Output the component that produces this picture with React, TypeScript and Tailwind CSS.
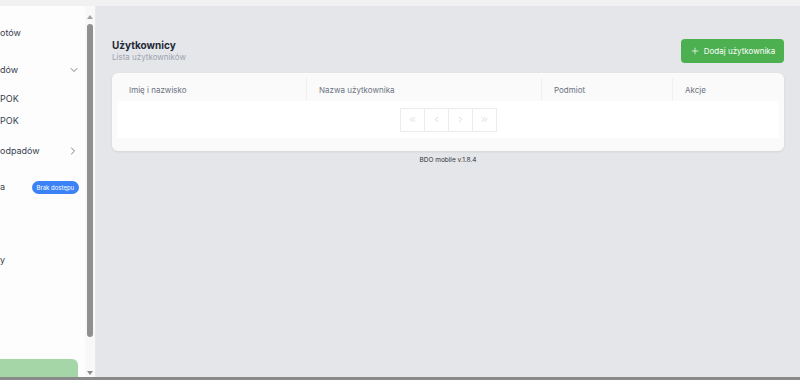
import React from "react";
import { ChevronDown, ChevronRight, ChevronLeft, ChevronsLeft, ChevronsRight, Plus } from "lucide-react";

function SideRow({ children, mt, right, pr = "pr-[6px]" }: { children: React.ReactNode; mt: string; right?: React.ReactNode; pr?: string }) {
  return (
    <div className={`flex h-[20px] items-center justify-between ${pr} ${mt}`}>
      <span className="text-[9px] text-[#374151]">{children}</span>
      {right}
    </div>
  );
}

export default function App() {
  const cols = [
    { label: "Imię i nazwisko", w: "w-[190px]" },
    { label: "Nazwa użytkownika", w: "w-[235px]" },
    { label: "Podmiot", w: "w-[131px]" },
    { label: "Akcje", w: "flex-1" },
  ];
  return (
    <div className="flex h-[380px] w-[800px] flex-col overflow-hidden bg-[#f1f1f1]" style={{ fontFamily: "Inter, 'Noto Sans', sans-serif" }}>
      <div className="h-[6px] shrink-0 bg-[#f1f1f1]" />
      <div className="flex min-h-0 flex-1">
        {/* Sidebar */}
        <div className="flex w-[96px] shrink-0 bg-[#fdfdfd] border-r border-[#e9e9e9]">
          <div className="flex w-[86px] flex-col">
            <SideRow mt="mt-[17px]">otów</SideRow>
            <SideRow mt="mt-[17px]" pr="pr-[5px]" right={<ChevronDown size={12} strokeWidth={1.5} className="text-[#4b5563]" />}>dów</SideRow>
            <SideRow mt="mt-[9px]">POK</SideRow>
            <SideRow mt="mt-[2px]">POK</SideRow>
            <SideRow mt="mt-[10px]" pr="pr-[6px]" right={<ChevronRight size={12} strokeWidth={1.5} className="text-[#4b5563]" />}>odpadów</SideRow>
            <SideRow
              mt="mt-[16px]"
              right={
                <span className="rounded-full bg-[#3b82f6] px-[5px] py-[2px] text-[6px] leading-[9px] text-white">Brak dostępu</span>
              }
            >
              a
            </SideRow>
            <SideRow mt="mt-[53px]">y</SideRow>
            <div className="mt-auto h-[18px] w-[78px] rounded-tr-[6px] bg-[#a5d6a7]" />
          </div>
          {/* scrollbar */}
          <div className="flex w-[10px] flex-col items-center bg-[#f8f8f8]">
            <div className="mt-[9px] h-0 w-0 border-x-[3px] border-b-[4px] border-x-transparent border-b-[#a3a3a3]" />
            <div className="mt-[5px] h-[313px] w-[6px] rounded-[3px] bg-[#909090]" />
            <div className="mt-auto mb-[2px] h-0 w-0 border-x-[3px] border-t-[4px] border-x-transparent border-t-[#8a8a8a]" />
          </div>
        </div>

        {/* Main */}
        <div className="flex flex-1 flex-col bg-[#e5e6ea] px-[16px] pt-[33px]">
          <div className="flex h-[24px] items-center justify-between">
            <div className="flex flex-col">
              <div className="text-[10px] font-bold leading-[13px] text-[#1f2937]">Użytkownicy</div>
              <div className="text-[8px] leading-[11px] text-[#9ca3af]">Lista użytkowników</div>
            </div>
            <button className="flex h-[24px] w-[103px] items-center justify-center gap-[4px] rounded-[4px] bg-[#4caf50] text-[8px] text-white">
              <Plus size={10} strokeWidth={1.8} />
              <span>Dodaj użytkownika</span>
            </button>
          </div>

          <div className="mt-[10px] rounded-[6px] bg-[#fafafa] px-[5px] pt-[5px] pb-[13px] shadow-[0_1px_3px_rgba(0,0,0,0.08)]">
            <div className="flex h-[23px] items-center">
              {cols.map((c, i) => (
                <div key={c.label} className={`flex h-full items-center pl-[12px] text-[8px] text-[#6b7280] ${c.w} ${i < 3 ? "border-r border-[#f0f0f0]" : ""}`}>
                  {c.label}
                </div>
              ))}
            </div>
            <div className="flex h-[37px] items-center justify-center bg-white">
              <div className="flex">
                {[ChevronsLeft, ChevronLeft, ChevronRight, ChevronsRight].map((Icon, i) => (
                  <div key={i} className={`flex h-[24px] w-[25px] items-center justify-center border border-[#ececec] ${i > 0 ? "-ml-px" : ""}`}>
                    <Icon size={9} strokeWidth={1.4} className="text-[#b4b4b4]" />
                  </div>
                ))}
              </div>
            </div>
          </div>

          <div className="mt-[4px] text-center text-[6.5px] leading-[10px] text-[#333]">BDO mobile v.1.8.4</div>
        </div>
      </div>
      <div className="h-[3px] shrink-0 bg-[#8a8a8a]" />
    </div>
  );
}
